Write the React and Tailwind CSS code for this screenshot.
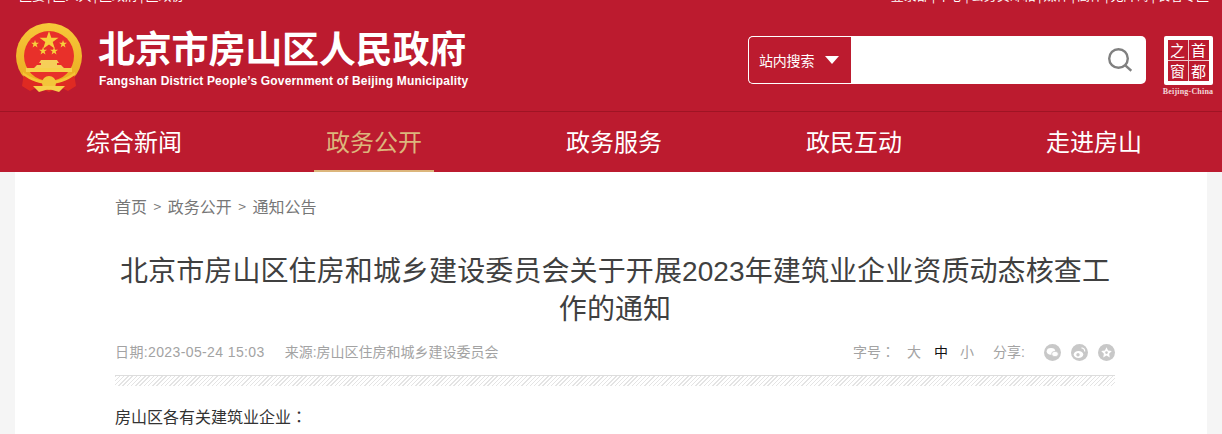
import React from "react";

const CJK = "font-['Noto_Sans_CJK_SC','Noto_Sans',sans-serif]";
const MIX = "font-['Liberation_Sans','Noto_Sans_CJK_SC',sans-serif]";
const TC = "font-['Noto_Sans_CJK_TC',sans-serif]";

function Emblem() {
  return (
    <svg width="68" height="72" viewBox="0 0 68 72" className="shrink-0">
      <defs>
        <linearGradient id="gold" x1="0" y1="0" x2="0" y2="1">
          <stop offset="0" stopColor="#f7c93a" />
          <stop offset="1" stopColor="#e9a91f" />
        </linearGradient>
      </defs>
      <circle cx="34" cy="33" r="33" fill="url(#gold)" />
      <circle cx="34" cy="33" r="25" fill="#e8302a" />
      <path d="M34 8l2.3 6.8h7.2l-5.8 4.2 2.2 6.8-5.9-4.2-5.9 4.2 2.2-6.8-5.8-4.2h7.2z" fill="#f7d03c" />
      <path d="M20 17l1 2.8h3l-2.4 1.8.9 2.8-2.5-1.7-2.4 1.7.9-2.8-2.4-1.8h3z" fill="#f7d03c" />
      <path d="M48 17l1 2.8h3l-2.4 1.8.9 2.8-2.5-1.7-2.4 1.7.9-2.8-2.4-1.8h3z" fill="#f7d03c" />
      <path d="M28 24l1 2.8h3l-2.4 1.8.9 2.8-2.5-1.7-2.4 1.7.9-2.8-2.4-1.8h3z" fill="#f7d03c" />
      <path d="M39 24l1 2.8h3l-2.4 1.8.9 2.8-2.5-1.7-2.4 1.7.9-2.8-2.4-1.8h3z" fill="#f7d03c" />
      <path d="M24 40l2-3h16l2 3h-2v2h4l3 3H19l3-3h4v-2z" fill="#f6cf58" />
      <path d="M11 45h46v4H11z" fill="#f6d04a" />
      <path d="M9 50c8 7 17 9 25 9s17-2 25-9l2 13-8 5-8-4-11 5-11-5-8 4-8-5z" fill="#df2a22" />
      <path d="M8 49c8 6 17 9 26 9s18-3 26-9v3c-8 6-17 9-26 9S16 58 8 52z" fill="#f5c535" />
      <circle cx="34" cy="60" r="7" fill="#f3c53a" />
      <path d="M18 63h32l-6 6-10-3-10 3z" fill="#f6d04a" />
    </svg>
  );
}

function CapitalLogo() {
  return (
    <div className="flex flex-col items-center w-[56px] shrink-0">
      <div className="w-[49px] h-[49px] bg-white rounded-[2px] p-[4px]">
        <div className={`w-full h-full bg-[#eec9cd] grid grid-cols-2 grid-rows-2 gap-[1px] text-white text-[15px] leading-[20px] text-center ${CJK}`}>
          <span className="bg-[#bc1b2f]">之</span>
          <span className="bg-[#bc1b2f]">首</span>
          <span className="bg-[#bc1b2f]">窗</span>
          <span className="bg-[#bc1b2f]">都</span>
        </div>
      </div>
      <span className="text-[#f3d7da] text-[8px] leading-[10px] mt-[2px] font-bold tracking-[0.2px] whitespace-nowrap font-['Liberation_Serif',serif]">Beijing-China</span>
    </div>
  );
}

function Links({ items }) {
  return (
    <span className="flex items-center whitespace-nowrap leading-[20px]">
      {items.map((t, i) => (
        <React.Fragment key={t}>
          {i > 0 && <span className="mx-[2px]">|</span>}
          <span>{t}</span>
        </React.Fragment>
      ))}
    </span>
  );
}

function Top() {
  return (
    <div className="h-[172px] bg-[#bc1b2f] flex flex-col">
      <div className="h-[111px] border-b border-[#9f1424] box-content flex flex-col overflow-hidden">
        <div className={`h-[8px] overflow-hidden text-white text-[13px] flex justify-between pl-[19px] pr-[13px] ${CJK}`}>
          <div className="-mt-[15px]"><Links items={["区委", "区人大", "区政府", "区政协"]} /></div>
          <div className="-mt-[15px]"><Links items={["登录部", "中心", "公务员邮箱", "媒体", "高体", "无障碍", "长者专区"]} /></div>
        </div>
        <div className="flex items-start justify-between pr-[6px] pl-[15px] pt-[14px]">
          <div className="flex items-start">
            <div className="mt-[1px]"><Emblem /></div>
            <div className="ml-[15px] flex flex-col text-white">
              <span className={`text-[37px] leading-[44px] tracking-[-0.2px] font-bold mt-[3px] whitespace-nowrap ${CJK}`}>北京市房山区人民政府</span>
              <span className="ml-[1px] text-[12px] leading-[14px] mt-[5px] font-bold tracking-[0.18px] whitespace-nowrap font-['Liberation_Sans',sans-serif]">Fangshan District People’s Government of Beijing Municipality</span>
            </div>
          </div>
          <div className="flex items-start mt-[14px]">
            <div className="w-[398px] h-[48px] bg-white rounded-[5px] flex items-stretch overflow-hidden">
              <div className={`w-[103px] bg-[#bc1b2f] border border-white border-r-0 rounded-l-[5px] flex items-center pl-[10px] text-white text-[14px] tracking-[-0.2px] ${CJK}`}>
                <span>站内搜索</span>
                <span className="ml-[11px] w-0 h-0 border-x-[7.5px] border-x-transparent border-t-[8px] border-t-white" />
              </div>
              <div className="flex-1 flex items-center justify-end pr-[14px]">
                <svg width="24" height="24" viewBox="0 0 24 24" fill="none" stroke="#808080" strokeWidth="2.4">
                  <circle cx="10.5" cy="10.5" r="9.3" />
                  <path d="M17.3 17.3l6 5.5" />
                </svg>
              </div>
            </div>
            <div className="ml-[14px]"><CapitalLogo /></div>
          </div>
        </div>
      </div>
      <nav className={`flex-1 flex gap-[120px] pl-[74px] overflow-hidden text-[24px] text-white ${CJK}`}>
        {["综合新闻", "政务公开", "政务服务", "政民互动", "走进房山"].map((t, i) => (
          <a
            key={t}
            className={`w-[120px] shrink-0 h-full flex items-center justify-center border-b-[2px] ${i === 1 ? "text-[#dcb67c] border-[#dcb67c]" : "border-transparent"}`}
          >
            {t}
          </a>
        ))}
      </nav>
    </div>
  );
}

function Meta() {
  return (
    <div className={`flex items-center justify-between h-[20px] mt-[13px] text-[14px] text-[#a3a3a3] ${MIX}`}>
      <div className="flex items-center whitespace-nowrap">
        <span className="tracking-[0.38px]">日期:2023-05-24 15:03</span>
        <span className="ml-[20px]">来源:房山区住房和城乡建设委员会</span>
      </div>
      <div className="flex items-center whitespace-nowrap">
        <span>字号<span className={TC}>：</span></span>
        <span className="ml-[12px]">大</span>
        <span className="ml-[13px] text-[#111]">中</span>
        <span className="ml-[12px]">小</span>
        <span className="ml-[19px]">分享:</span>
        <div className="ml-[19px] flex gap-[10px]">
          <svg width="17" height="17" viewBox="0 0 17 17">
            <circle cx="8.5" cy="8.5" r="8.5" fill="#c8c8c8" />
            <ellipse cx="7" cy="7.3" rx="4.3" ry="3.4" fill="#fff" />
            <ellipse cx="11" cy="10" rx="3.4" ry="2.7" fill="#fff" stroke="#c8c8c8" strokeWidth="0.8" />
          </svg>
          <svg width="17" height="17" viewBox="0 0 17 17">
            <circle cx="8.5" cy="8.5" r="8.5" fill="#c8c8c8" />
            <ellipse cx="7.5" cy="10.5" rx="4.8" ry="3.5" fill="#fff" />
            <circle cx="7" cy="10.7" r="1.7" fill="#c8c8c8" />
            <path d="M10.5 3.8a3.4 3.4 0 0 1 3.2 3.7" stroke="#fff" strokeWidth="1.2" fill="none" />
          </svg>
          <svg width="17" height="17" viewBox="0 0 17 17">
            <circle cx="8.5" cy="8.5" r="8.5" fill="#c8c8c8" />
            <path d="M8.5 3.2l1.6 3.4 3.7.5-2.7 2.6.7 3.7-3.3-1.8-3.3 1.8.7-3.7-2.7-2.6 3.7-.5z" fill="#fff" />
            <circle cx="8.5" cy="8.6" r="1.3" fill="#c8c8c8" />
          </svg>
        </div>
      </div>
    </div>
  );
}

export default function App() {
  return (
    <div className="w-[1222px] h-[434px] overflow-hidden bg-[#f5f5f5]">
      <Top />
      <main className="w-[1192px] mx-auto bg-white h-[262px] pl-[100px] pr-[92px]">
        <div className={`pt-[23px] flex items-center text-[16px] leading-[22px] text-[#777] ${CJK}`}>
          <span>首页</span>
          <span className="mx-[6.5px] text-[14px]">&gt;</span>
          <span>政务公开</span>
          <span className="mx-[6.5px] text-[14px]">&gt;</span>
          <span>通知公告</span>
        </div>
        <h1 className={`mt-[36px] text-center text-[28px] leading-[38px] tracking-[0.1px] text-[#404040] ${MIX}`}>
          北京市房山区住房和城乡建设委员会关于开展2023年建筑业企业资质动态核查工作的通知
        </h1>
        <Meta />
        <div className="mt-[13px] h-[11px] border-t border-[#dddddd] bg-[repeating-linear-gradient(135deg,#e4e4e4_0,#e4e4e4_1px,#ffffff_1px,#ffffff_3px)]" />
        <p className={`mt-[18px] text-[16px] leading-[24px] text-[#333] ${CJK}`}>房山区各有关建筑业企业<span className={TC}>：</span></p>
      </main>
    </div>
  );
}
